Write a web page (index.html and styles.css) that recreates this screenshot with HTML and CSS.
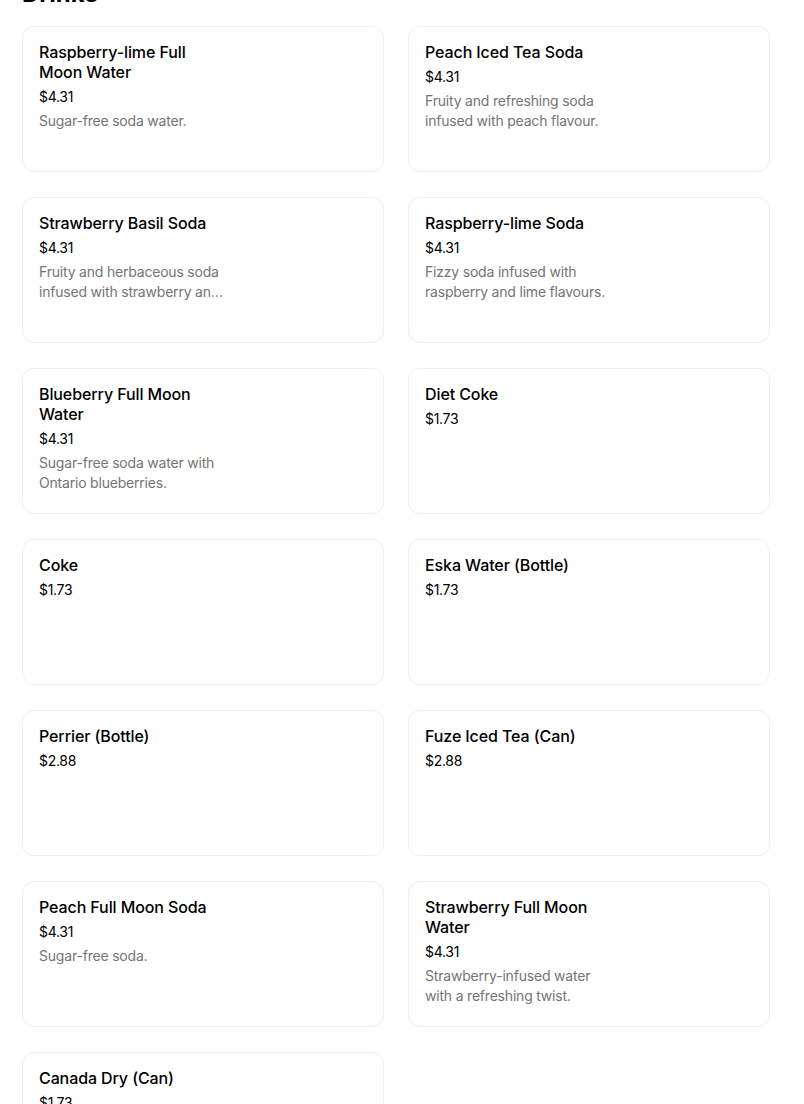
FILE: index.html
```html
<!DOCTYPE html>
<html>
<head>
<meta charset="utf-8">
<link rel="stylesheet" href="styles.css">
</head>
<body>
<main class="page">
  <h2 class="section-title">Drinks</h2>
  <div class="grid">
    <div class="card"><div class="info"><div class="name">Raspberry-lime Full Moon Water</div><div class="price">$4.31</div><div class="desc">Sugar-free soda water.</div></div></div>
    <div class="card"><div class="info"><div class="name">Peach Iced Tea Soda</div><div class="price">$4.31</div><div class="desc">Fruity and refreshing soda infused with peach flavour.</div></div></div>
    <div class="card"><div class="info"><div class="name">Strawberry Basil Soda</div><div class="price">$4.31</div><div class="desc">Fruity and herbaceous soda infused with strawberry and basil flavours.</div></div></div>
    <div class="card"><div class="info"><div class="name">Raspberry-lime Soda</div><div class="price">$4.31</div><div class="desc">Fizzy soda infused with raspberry and lime flavours.</div></div></div>
    <div class="card"><div class="info"><div class="name">Blueberry Full Moon Water</div><div class="price">$4.31</div><div class="desc">Sugar-free soda water with Ontario blueberries.</div></div></div>
    <div class="card"><div class="info"><div class="name">Diet Coke</div><div class="price">$1.73</div></div></div>
    <div class="card"><div class="info"><div class="name">Coke</div><div class="price">$1.73</div></div></div>
    <div class="card"><div class="info"><div class="name">Eska Water (Bottle)</div><div class="price">$1.73</div></div></div>
    <div class="card"><div class="info"><div class="name">Perrier (Bottle)</div><div class="price">$2.88</div></div></div>
    <div class="card"><div class="info"><div class="name">Fuze Iced Tea (Can)</div><div class="price">$2.88</div></div></div>
    <div class="card"><div class="info"><div class="name">Peach Full Moon Soda</div><div class="price">$4.31</div><div class="desc">Sugar-free soda.</div></div></div>
    <div class="card"><div class="info"><div class="name">Strawberry Full Moon Water</div><div class="price">$4.31</div><div class="desc">Strawberry-infused water with a refreshing twist.</div></div></div>
    <div class="card"><div class="info"><div class="name">Canada Dry (Can)</div><div class="price">$1.73</div></div></div>
  </div>
</main>
</body>
</html>
```

FILE: styles.css
```css
html, body {
  margin: 0;
  padding: 0;
  background: #ffffff;
}
body {
  font-family: Inter, "Noto Sans", sans-serif;
  color: #000000;
  overflow: hidden;
  height: 1104px;
}
.page {
  padding: 0 34px 0 22px;
  margin-top: -22px;
}
.section-title {
  margin: 0 0 16px 0;
  font-size: 24px;
  line-height: 32px;
  font-weight: 700;
}
.grid {
  display: grid;
  grid-template-columns: 1fr 1fr;
  column-gap: 24px;
  row-gap: 25px;
}
.card {
  height: 146px;
  box-sizing: border-box;
  border: 1px solid #f0f0f0;
  border-radius: 12px;
  padding: 15px 16px;
  display: flex;
}
.info {
  width: 186px;
  display: flex;
  flex-direction: column;
}
.name {
  font-size: 16px;
  line-height: 20px;
  font-weight: 500;
  letter-spacing: -0.1px;
  margin-bottom: 5px;
}
.price {
  font-size: 14px;
  line-height: 20px;
  letter-spacing: -0.3px;
}
.desc {
  margin-top: 4px;
  font-size: 14px;
  line-height: 20px;
  color: #757575;
  letter-spacing: -0.2px;
  display: -webkit-box;
  -webkit-line-clamp: 2;
  -webkit-box-orient: vertical;
  overflow: hidden;
}
```
